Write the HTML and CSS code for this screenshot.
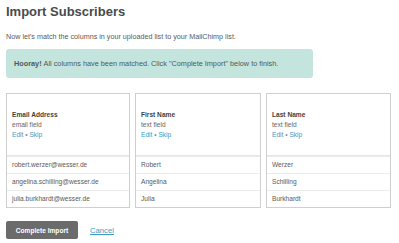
FILE: index.html
```html
<!DOCTYPE html>
<html lang="en">
	<head>
		<meta charset="UTF-8">
		<title>Import Subscribers</title>
		<link rel="stylesheet" href="styles.css">
	</head>
	<body>
		<h1 class="title">Import Subscribers</h1>
		<p class="intro">Now let's match the columns in your uploaded list to your MailChimp list.</p>
		<div class="notice"><strong>Hooray!</strong> All columns have been matched. Click "Complete Import" below to finish.</div>
		<div class="columns">
			<div class="card">
				<div class="card-head">
					<div class="field-name">Email Address</div>
					<div class="field-type">email field</div>
					<div class="field-actions"><a href="#">Edit</a> <span class="dot">&bull;</span> <a href="#">Skip</a></div>
				</div>
				<div class="row">robert.werzer@wesser.de</div>
				<div class="row">angelina.schilling@wesser.de</div>
				<div class="row">julia.burkhardt@wesser.de</div>
			</div>
			<div class="card">
				<div class="card-head">
					<div class="field-name">First Name</div>
					<div class="field-type">text field</div>
					<div class="field-actions"><a href="#">Edit</a> <span class="dot">&bull;</span> <a href="#">Skip</a></div>
				</div>
				<div class="row">Robert</div>
				<div class="row">Angelina</div>
				<div class="row">Julia</div>
			</div>
			<div class="card">
				<div class="card-head">
					<div class="field-name">Last Name</div>
					<div class="field-type">text field</div>
					<div class="field-actions"><a href="#">Edit</a> <span class="dot">&bull;</span> <a href="#">Skip</a></div>
				</div>
				<div class="row">Werzer</div>
				<div class="row">Schilling</div>
				<div class="row">Burkhardt</div>
			</div>
		</div>
		<div class="actions">
			<button class="btn" type="button">Complete Import</button>
			<a class="cancel" href="#">Cancel</a>
		</div>
	</body>
</html>
```

FILE: styles.css
```css
html, body {
	margin: 0;
	padding: 0;
	background: #fff;
	font-family: 'Liberation Sans', Arial, sans-serif;
	color: #555;
}
body {
	padding: 0 10px 0 6px;
}
.title {
	margin: 0;
	padding-top: 4px;
	font-size: 13px;
	line-height: 16px;
	font-weight: bold;
	color: #4a4a4a;
}
.intro {
	margin: 12px 0 0;
	font-size: 7.2px;
	line-height: 10px;
	color: #5a5a5a;
}
.notice {
	margin-top: 7px;
	width: 307px;
	box-sizing: border-box;
	height: 29px;
	padding: 0 8px;
	display: flex;
	align-items: center;
	background: #c4e5de;
	border-radius: 3px;
	font-size: 7.3px;
	color: #4f5a58;
}
.notice strong {
	margin-right: 2px;
}
.columns {
	margin-top: 15px;
	display: grid;
	grid-template-columns: 124px 126px 125px;
	gap: 5px;
}
.card {
	border: 1px solid #cfcfcf;
}
.card-head {
	height: 62px;
	box-sizing: border-box;
	padding: 16px 5px 0;
	border-bottom: 1px solid #e6e6e6;
	font-size: 6.6px;
	line-height: 10px;
}
.field-name {
	font-weight: bold;
	color: #3f3f3f;
}
.field-type {
	color: #666;
}
.field-actions a {
	color: #3a9cc4;
	text-decoration: none;
}
.dot {
	color: #888;
}
.row {
	height: 16px;
	line-height: 16px;
	padding: 0 5px;
	font-size: 6.6px;
	color: #5a5a5a;
	border-top: 1px solid #ececec;
}
.row:first-of-type {
	border-top: 0;
}
.actions {
	margin-top: 13px;
	display: flex;
	align-items: center;
	gap: 12px;
}
.btn {
	width: 72px;
	height: 18px;
	padding: 0;
	border: 0;
	border-radius: 2px;
	background: #6b6b6b;
	color: #fff;
	font-family: inherit;
	font-size: 6.6px;
	font-weight: bold;
}
.cancel {
	font-size: 7.7px;
	color: #3a9cc4;
}
```
